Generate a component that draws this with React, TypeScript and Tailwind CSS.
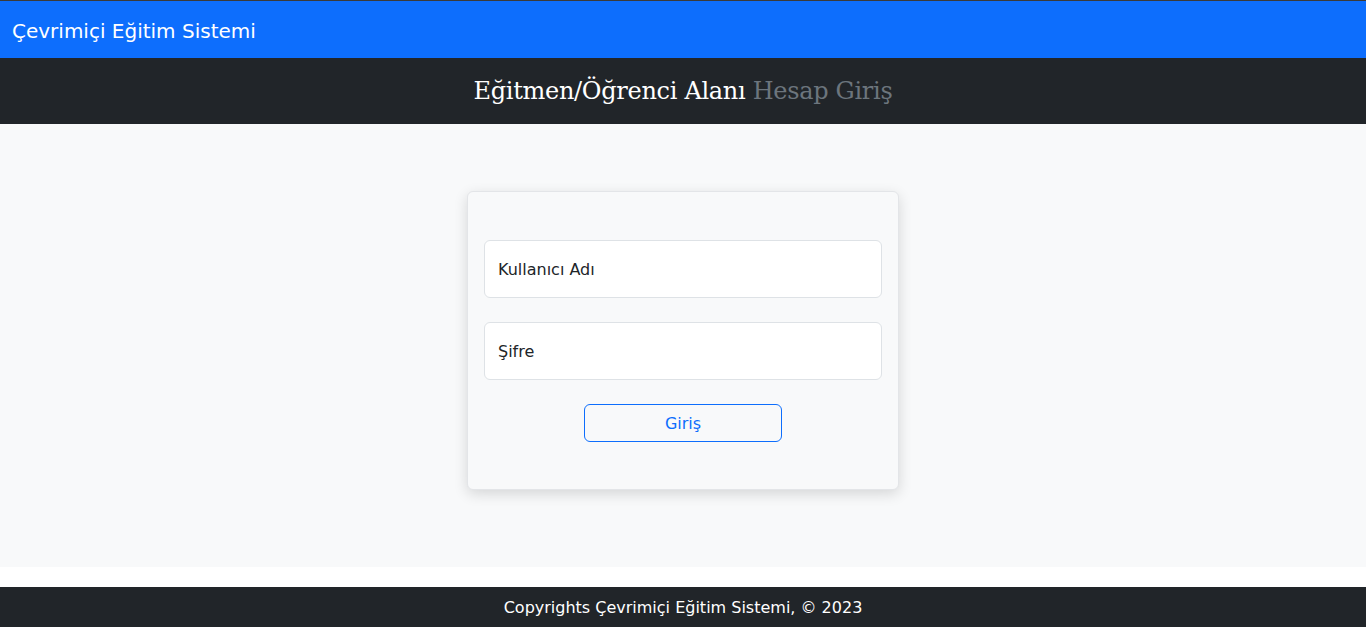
export default function App() {
  return (
    <div className="min-h-screen bg-white font-['DejaVu_Sans',sans-serif] text-[#212529]">
      {/* Navbar */}
      <div className="border-t border-[#3a3a3a] bg-[#0d6efd] h-[58px] flex items-center px-3 pt-0.5">
        <span className="text-white text-[20px]">Çevrimiçi Eğitim Sistemi</span>
      </div>

      {/* Page title */}
      <div className="bg-[#212529] h-[66px] flex items-center justify-center">
        <h1 className="font-['DejaVu_Serif',serif] text-[24px] text-white tracking-[-0.3px]">
          Eğitmen/Öğrenci Alanı <span className="text-[#6c757d]">Hesap Giriş</span>
        </h1>
      </div>

      {/* Login */}
      <div className="bg-[#f8f9fa] h-[443px] pt-[67px]">
        <div className="mx-auto w-[432px] h-[299px] rounded-md border border-[#e3e5e8] bg-[#f8f9fa] shadow-[0_4px_14px_rgba(0,0,0,0.14)] px-4 pt-12">
          <input
            placeholder="Kullanıcı Adı"
            className="w-full h-[58px] rounded-md border border-[#dee2e6] bg-white px-[13px] pt-px text-base placeholder:text-[#212529] outline-none"
          />
          <input
            type="password"
            placeholder="Şifre"
            className="mt-6 w-full h-[58px] rounded-md border border-[#dee2e6] bg-white px-[13px] pt-px text-base placeholder:text-[#212529] outline-none"
          />
          <div className="flex justify-center mt-6">
            <button className="w-[198px] h-[38px] rounded-md border border-[#0d6efd] text-[#0d6efd] text-base pt-0.5">
              Giriş
            </button>
          </div>
        </div>
      </div>

      <div className="h-5 bg-white" />

      {/* Footer */}
      <div className="bg-[#212529] h-10 flex items-center justify-center text-white text-base pt-0.5">
        Copyrights Çevrimiçi Eğitim Sistemi, © 2023
      </div>
    </div>
  );
}
